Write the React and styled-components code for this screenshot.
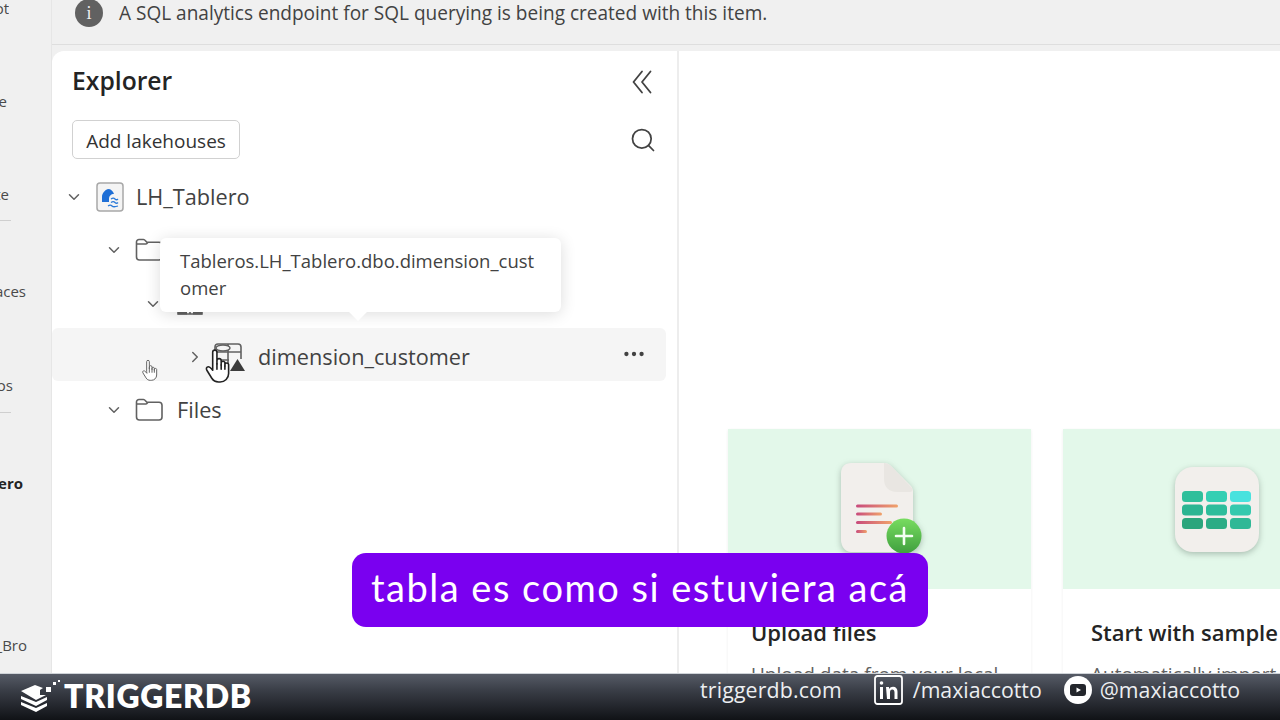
import React from 'react';
import styled, { createGlobalStyle } from 'styled-components';
import { ChevronDown, ChevronRight, Search, MoreHorizontal } from 'lucide-react';

const GlobalStyle = createGlobalStyle`
  html, body { margin: 0; padding: 0; background: #f0f0f0; }
  * { box-sizing: border-box; }
  body { font-family: "Open Sans", "Noto Sans", sans-serif; overflow: hidden; }
`;

const Page = styled.div`
  position: relative;
  width: 1280px;
  height: 720px;
  display: flex;
  flex-direction: column;
  overflow: hidden;
`;

const Workspace = styled.div`
  flex: 0 0 673px;
  display: flex;
  min-height: 0;
`;

const Rail = styled.nav`
  flex: 0 0 52px;
  background: #f0f0f0;
  border-right: 1px solid #e6e6e6;
  display: flex;
  flex-direction: column;
  overflow: hidden;
`;

const RailItem = styled.div`
  height: ${p => p.$h}px;
  flex: none;
  display: flex;
  align-items: flex-end;
  justify-content: flex-end;
  width: ${p => p.$end}px;
  overflow: hidden;
  white-space: nowrap;
  font-size: 15px;
  line-height: 20px;
  color: ${p => (p.$bold ? '#242424' : '#4a4a4a')};
  font-weight: ${p => (p.$bold ? 700 : 400)};
`;

const RailRule = styled.div`
  width: 11px;
  height: 1px;
  flex: none;
  background: #cfcfcf;
  margin-top: ${p => p.$top}px;
`;

const Main = styled.div`
  flex: 1;
  display: flex;
  flex-direction: column;
  min-width: 0;
`;

const Banner = styled.div`
  flex: 0 0 45px;
  display: flex;
  align-items: flex-start;
  gap: 16px;
  padding: 0 0 0 23px;
  background: #f0f0f0;
  border-bottom: 1px solid #dedede;
  font-size: 19.050px;
  line-height: 26px;
  color: #424242;
  margin-bottom: 6px;
`;

const BannerIcon = styled.span`
  width: 28px;
  height: 28px;
  margin-top: -1px;
  border-radius: 50%;
  background: #616161;
  color: #f0f0f0;
  display: flex;
  align-items: center;
  justify-content: center;
  font-size: 18px;
  font-family: "Liberation Serif", serif;
`;

const BannerText = styled.span`
  white-space: nowrap;
`;

const Panes = styled.div`
  flex: 1;
  display: flex;
  background: #fff;
  border-top-left-radius: 12px;
  min-height: 0;
`;

const Explorer = styled.section`
  flex: 0 0 627px;
  padding-top: 12px;
  border-right: 2px solid #ededed;
  display: flex;
  flex-direction: column;
`;

const ExplorerHead = styled.div`
  display: flex;
  align-items: center;
  justify-content: space-between;
  padding: 0 25px 0 20px;
  height: 34px;
`;

const Title = styled.h2`
  margin: 0;
  font-size: 24.700px;
  font-weight: 600;
  color: #242424;
`;

const CollapseSvg = styled.svg`
  margin-top: 3px;
`;

const Tools = styled.div`
  display: flex;
  align-items: center;
  justify-content: space-between;
  margin-top: 23px;
  padding: 0 20px 0 20px;
`;

const AddButton = styled.button`
  height: 39px;
  width: 168px;
  padding: 2px 0 0;
  border: 1px solid #d1d1d1;
  border-radius: 5px;
  background: #fff;
  color: #333;
  font: 400 19px "Open Sans", sans-serif;
`;

const Tree = styled.div`
  margin-top: 10px;
  display: flex;
  flex-direction: column;
  padding-right: 11px;
`;

const Row = styled.div`
  height: 53px;
  display: flex;
  align-items: center;
  padding-left: ${p => p.$indent}px;
  padding-top: ${p => p.$top ?? 4}px;
  gap: ${p => p.$gap || 11}px;
  border-radius: 6px;
  background: ${p => (p.$active ? '#f5f5f5' : 'transparent')};
  color: #424242;
  font-size: 21.700px;
  position: relative;
`;

const Chevron = styled.span`
  width: 20px;
  display: flex;
  justify-content: center;
  color: #616161;
`;

const IconSlot = styled.span`
  display: flex;
  margin-left: ${p => p.$left || 0}px;
  margin-right: ${p => p.$right || 0}px;
`;

const RowMenu = styled.span`
  margin-left: auto;
  margin-right: 19px;
  margin-top: -5px;
  display: flex;
  color: #424242;
`;

const Tooltip = styled.div`
  position: absolute;
  left: 160px;
  top: 238px;
  width: 401px;
  height: 74px;
  padding: 9px 20px;
  background: #fff;
  border-radius: 6px;
  box-shadow: 0 2px 16px rgba(0, 0, 0, 0.14);
  font-size: 18.500px;
  line-height: 27px;
  color: #424242;
  overflow-wrap: anywhere;

  &::after {
    content: '';
    position: absolute;
    left: 191px;
    bottom: -6px;
    width: 14px;
    height: 14px;
    background: #fff;
    transform: rotate(45deg);
  }
`;

const Cursor = styled.span`
  position: absolute;
  left: ${p => p.$x}px;
  top: ${p => p.$y}px;
  display: flex;
`;

const Home = styled.section`
  flex: 1;
  min-width: 0;
  overflow: hidden;
  display: flex;
  align-items: flex-start;
  gap: 32px;
  padding: 378px 0 0 49px;
`;

const Card = styled.article`
  flex: 0 0 303px;
  height: 300px;
  background: #fff;
  box-shadow: 0 1px 3px rgba(0, 0, 0, 0.07);
`;

const CardArt = styled.div`
  height: 160px;
  background: #e3f8ea;
  display: flex;
  align-items: center;
  justify-content: center;
`;

const CardBody = styled.div`
  padding: 29px 0 0 ${p => p.$left}px;
  white-space: nowrap;
`;

const CardTitle = styled.h3`
  margin: 0;
  font-size: 22px;
  line-height: 28px;
  font-weight: 600;
  color: #242424;
`;

const CardText = styled.p`
  margin: 15px 0 0;
  font-size: 19px;
  line-height: 26px;
  color: #616161;
`;

const ArtSvg = styled.svg`
  margin: ${p => p.$margin};
  filter: drop-shadow(0 2px 3px rgba(60, 80, 70, 0.35));
`;

const Caption = styled.div`
  position: absolute;
  left: 352px;
  top: 553px;
  width: 576px;
  height: 74px;
  padding-bottom: 6px;
  border-radius: 14px;
  background: #7a00f0;
  color: #fff;
  display: flex;
  align-items: center;
  justify-content: center;
  font: 400 38px Lato, sans-serif;
  letter-spacing: 1.500px;
  white-space: nowrap;
`;

const Footer = styled.footer`
  flex: 1;
  display: flex;
  align-items: flex-start;
  padding: 1px 40px 0 20px;
  background: linear-gradient(#565b66, #3a3e47 35%, #101216);
  border-top: 1px solid #cfd3d8;
  color: #fff;
  position: relative;
`;

const Brand = styled.div`
  display: flex;
  align-items: center;
  gap: 2px;
  font: 800 32px Lato, sans-serif;
  letter-spacing: 0.650px;
  line-height: 36px;
  margin-top: 3px;
`;

const Socials = styled.div`
  margin-left: auto;
  display: flex;
  align-items: center;
  color: #eceef1;
  font-size: 21.300px;
  line-height: 28px;
`;

const SiteLink = styled.span`
  letter-spacing: 0.150px;
`;

const SocialIcon = styled.span`
  display: flex;
  margin: ${p => p.$margin};
`;

const CollapseIcon = () => (
  <CollapseSvg width="20" height="24" viewBox="0 0 20 24" fill="none" stroke="#424242" strokeWidth="1.800" strokeLinecap="round" strokeLinejoin="round">
    <path d="M10 1.500L1.500 12l8.500 10.500M18.500 1.500L10 12l8.500 10.500" />
  </CollapseSvg>
);

const FolderIcon = () => (
  <svg width="28" height="24" viewBox="0 0 28 24" fill="none" stroke="#616161" strokeWidth="1.600">
    <path d="M1.500 6V4a2.500 2.500 0 0 1 2.500-2.500h4.500c1.500 0 2 1.600 3.500 2.800h12a3 3 0 0 1 3 3V19a3 3 0 0 1-3 3H4.500a3 3 0 0 1-3-3V6h9.500c.8 0 1.500-1 2-1.700" />
  </svg>
);

const LakehouseIcon = () => (
  <svg width="28" height="30" viewBox="0 0 28 30">
    <rect x="1" y="1" width="26" height="28" rx="3" fill="#f4f4f4" stroke="#a8a8a8" strokeWidth="1.500" />
    <path d="M6 20v-5c0-4 3-7 6-8 3 0 5 2 6 5-3 0-5 2-5 5v3z" fill="#1f6fd6" />
    <path d="M15 17c1.500-1 3-1 4 0s2 1 3 0M15 20.500c1.500-1 3-1 4 0s2 1 3 0M12 24c1.500-1 3-1 4 0s3 1 6 0" fill="none" stroke="#2a79d8" strokeWidth="1.300" />
  </svg>
);

const SchemaIcon = () => (
  <svg width="26" height="24" viewBox="0 0 26 24" fill="none" stroke="#616161" strokeWidth="1.600">
    <path d="M1 2h24v20H1zM1 8h24M1 15h24M13 2v20" />
    <path d="M1 21h9M16 21h9" strokeWidth="3" />
  </svg>
);

const TableIcon = () => (
  <svg width="34" height="30" viewBox="0 0 34 30" fill="none">
    <path d="M3 10V5a3 3 0 0 1 3-3h20a3 3 0 0 1 3 3v12M3 10v13a3 3 0 0 0 3 3h10M3 10h26M16 2v24M3 18h14" stroke="#616161" strokeWidth="1.600" />
    <ellipse cx="11" cy="6" rx="7" ry="3" fill="#f5f5f5" stroke="#616161" strokeWidth="1.500" />
    <path d="M25.500 17l7.500 12H18z" fill="#3b3b3b" />
  </svg>
);

const HandCursor = ({ width, height, stroke, strokeWidth }) => (
  <svg width={width} height={height} viewBox="0 0 24 33" fill="#fff" stroke={stroke} strokeWidth={strokeWidth} strokeLinejoin="round" strokeLinecap="round">
    <path d="M7 18V4a2 2 0 0 1 4 0v11-3a2 2 0 0 1 4 0v4-2.500a2 2 0 0 1 3.500 0V17v-1.500a1.800 1.800 0 0 1 3.500 0V24c0 4.500-3.500 8-8 8h-1.500c-3 0-5-1.300-6.500-3.700L1.500 21c-1-1.600-.2-3.300 1.300-3.300 1.200 0 2.400 1 4.200 3.300z" />
    <path d="M11 15v5M15 16v4M18.500 17v3" fill="none" />
  </svg>
);

const FileArt = () => (
  <ArtSvg width="85" height="96" viewBox="0 0 85 96" $margin="-4px 0 0 0">
    <defs>
      <linearGradient id="plus" x1="0" y1="0" x2="0" y2="1">
        <stop offset="0" stopColor="#78dc60" />
        <stop offset="1" stopColor="#3f9f3e" />
      </linearGradient>
      <linearGradient id="lines" x1="0" y1="0" x2="1" y2="0">
        <stop offset="0" stopColor="#c84a7c" />
        <stop offset="1" stopColor="#f0a26a" />
      </linearGradient>
    </defs>
    <path d="M14 4h33c3 0 5 1 7 3l19 19c2 2 3 4 3 7v48c0 6-4 12-10 12H14C8 93 4 87 4 81V14C4 8 8 4 14 4z" fill="#f2efec" />
    <path d="M47 4c2 0 5 1 7 3l20 21c2 2 2 5-1 5H60c-8 0-13-5-13-13z" fill="#e9e6e2" />
    <g fill="url(#lines)">
      <rect x="19" y="45.500" width="42" height="3" rx="1.500" />
      <rect x="19" y="53.500" width="26" height="3" rx="1.500" />
      <rect x="19" y="62" width="36" height="3" rx="1.500" />
      <rect x="19" y="71" width="11" height="3" rx="1.500" />
    </g>
    <circle cx="67" cy="77" r="17.500" fill="url(#plus)" />
    <path d="M67 69v16M59 77h16" stroke="#f4fff2" strokeWidth="2.600" strokeLinecap="round" />
  </ArtSvg>
);

const GRID_COLORS = ['#2fbf9b', '#34cfb3', '#48e2de', '#2bb592', '#2dbd9b', '#34c9ae', '#2aa57c', '#2cac85', '#2fb896'];

const GridArt = () => (
  <ArtSvg width="86" height="87" viewBox="0 0 86 87" $margin="0 0 0 4px">
    <rect x="1" y="1" width="84" height="85" rx="18" fill="#f2efec" />
    {GRID_COLORS.map((color, i) => (
      <rect key={color + i} x={8 + (i % 3) * 24} y={25 + Math.floor(i / 3) * 13.500} width="21" height="11" rx="3.500" fill={color} />
    ))}
  </ArtSvg>
);

const LogoMark = () => (
  <svg width="42" height="34" viewBox="0 0 42 34" fill="#fff">
    <path d="M1 12l14-6 8 3-3 2v5h6l-10 5z" />
    <path d="M1 17l15 6 11-5v3L16 27 1 20zM1 23l15 6 11-5v3L16 33 1 26z" />
    <rect x="26" y="8" width="5" height="5" />
    <rect x="33" y="3" width="3" height="3" />
    <rect x="38" y="1" width="2" height="2" />
  </svg>
);

const LinkedInIcon = () => (
  <svg width="29" height="30" viewBox="0 0 29 30" fill="none">
    <rect x="1" y="1" width="27" height="28" rx="2.500" stroke="#fff" strokeWidth="1.800" />
    <circle cx="7.500" cy="8" r="1.800" fill="#fff" />
    <path d="M6 12h3v12H6zM12 12h3v2c1-1.500 2.500-2.300 4-2.300 3 0 4.500 2 4.500 5V24h-3v-6.500c0-2-.8-3-2.200-3-1.600 0-2.300 1.200-2.300 3V24h-3z" fill="#fff" />
  </svg>
);

const YoutubeIcon = () => (
  <svg width="28" height="28" viewBox="0 0 28 28">
    <circle cx="14" cy="14" r="14" fill="#fff" />
    <rect x="6" y="8" width="16" height="12" rx="3" fill="#23262c" />
    <path d="M12.500 11.500l4.500 2.500-4.500 2.500z" fill="#fff" />
  </svg>
);

const App = () => (
  <Page>
    <GlobalStyle />
    <Workspace>
      <Rail>
        <RailItem $h={18} $end={9}>Copilot</RailItem>
        <RailItem $h={93} $end={7}>Home</RailItem>
        <RailItem $h={93} $end={9}>Create</RailItem>
        <RailRule $top={16} />
        <RailItem $h={80} $end={26}>Workspaces</RailItem>
        <RailItem $h={94} $end={13}>Repos</RailItem>
        <RailRule $top={17} />
        <RailItem $h={80} $end={23} $bold>LH_Tablero</RailItem>
        <RailItem $h={162} $end={27}>Tablero_Bro</RailItem>
      </Rail>
      <Main>
        <Banner>
          <BannerIcon>i</BannerIcon>
          <BannerText>A SQL analytics endpoint for SQL querying is being created with this item.</BannerText>
        </Banner>
        <Panes>
          <Explorer>
            <ExplorerHead>
              <Title>Explorer</Title>
              <CollapseIcon />
            </ExplorerHead>
            <Tools>
              <AddButton>Add lakehouses</AddButton>
              <Search size={28} strokeWidth={1.500} color="#424242" />
            </Tools>
            <Tree>
              <Row $indent={12} $gap={12} $top={2}>
                <Chevron><ChevronDown size={18} /></Chevron>
                <LakehouseIcon />
                LH_Tablero
              </Row>
              <Row $indent={52} $top={2}>
                <Chevron><ChevronDown size={18} /></Chevron>
                <FolderIcon />
                Tables
              </Row>
              <Row $indent={91} $gap={14}>
                <Chevron><ChevronDown size={18} /></Chevron>
                <IconSlot><SchemaIcon /></IconSlot>
                dbo
              </Row>
              <Row $indent={133} $gap={3} $active>
                <Chevron><ChevronRight size={18} /></Chevron>
                <IconSlot $left={4}><TableIcon /></IconSlot>
                <IconSlot $left={9}>dimension_customer</IconSlot>
                <RowMenu><MoreHorizontal size={26} /></RowMenu>
              </Row>
              <Row $indent={52}>
                <Chevron><ChevronDown size={18} /></Chevron>
                <IconSlot $right={3}><FolderIcon /></IconSlot>
                Files
              </Row>
            </Tree>
          </Explorer>
          <Home>
            <Card>
              <CardArt><FileArt /></CardArt>
              <CardBody $left={23}>
                <CardTitle>Upload files</CardTitle>
                <CardText>Upload data from your local</CardText>
              </CardBody>
            </Card>
            <Card>
              <CardArt><GridArt /></CardArt>
              <CardBody $left={28}>
                <CardTitle>Start with sample data</CardTitle>
                <CardText>Automatically import data</CardText>
              </CardBody>
            </Card>
          </Home>
        </Panes>
      </Main>
    </Workspace>
    <Footer>
      <Brand><LogoMark />TRIGGERDB</Brand>
      <Socials>
        <SiteLink>triggerdb.com</SiteLink>
        <SocialIcon $margin="0 10px 0 32px"><LinkedInIcon /></SocialIcon>
        <span>/maxiaccotto</span>
        <SocialIcon $margin="0 8px 0 22px"><YoutubeIcon /></SocialIcon>
        <span>@maxiaccotto</span>
      </Socials>
    </Footer>
    <Tooltip>Tableros.LH_Tablero.dbo.dimension_customer</Tooltip>
    <Cursor $x={142} $y={359}><HandCursor width={16} height={22} stroke="#666" strokeWidth={1.500} /></Cursor>
    <Cursor $x={204} $y={348}><HandCursor width={28} height={35} stroke="#222" strokeWidth={1.500} /></Cursor>
    <Caption>tabla es como si estuviera acá</Caption>
  </Page>
);

export default App;
